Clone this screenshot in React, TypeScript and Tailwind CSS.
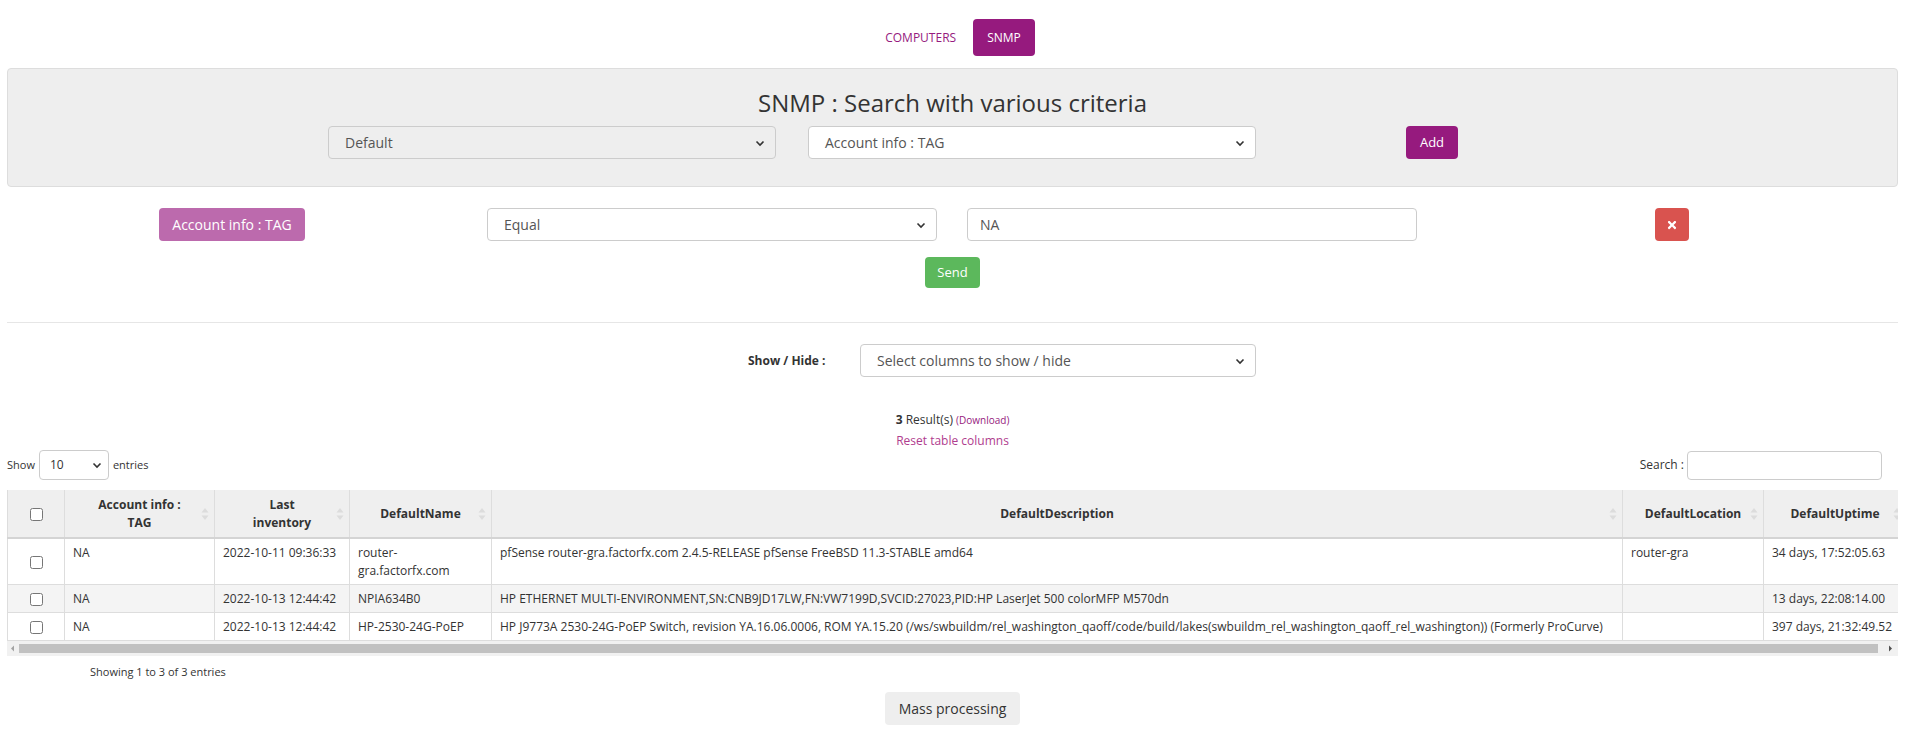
import React from "react";
import { FaTimes } from "react-icons/fa";

const purple = "bg-[#961a7e]";

const Chevron = () => (
  <svg width="10" height="10" viewBox="0 0 10 10" className="shrink-0">
    <path d="M1.5 3.5 L5 7 L8.5 3.5" fill="none" stroke="#333" strokeWidth="1.6" />
  </svg>
);

const SortIcon = () => (
  <svg width="8" height="14" viewBox="0 0 8 14" className="absolute right-[5px] top-1/2 -translate-y-1/2">
    <path d="M4 1 L7.5 5.5 H0.5 Z" fill="#dcdcdc" />
    <path d="M4 13 L7.5 8.5 H0.5 Z" fill="#dcdcdc" />
  </svg>
);

const Select = ({ label, className }: { label: string; className: string }) => (
  <div
    className={`flex items-center justify-between border border-[#ccc] rounded-[4px] pl-[16px] pr-[10px] text-[14px] text-[#555] ${className}`}
  >
    <span>{label}</span>
    <Chevron />
  </div>
);

const columns = [
  { key: "check", w: "w-[57px]" },
  { key: "Account info :\nTAG", w: "w-[150px]" },
  { key: "Last\ninventory", w: "w-[135px]" },
  { key: "DefaultName", w: "w-[142px]" },
  { key: "DefaultDescription", w: "w-[1131px]" },
  { key: "DefaultLocation", w: "w-[141px]" },
  { key: "DefaultUptime", w: "w-[143px]" },
];

const rows = [
  {
    tag: "NA",
    last: "2022-10-11 09:36:33",
    name: "router-\ngra.factorfx.com",
    desc: "pfSense router-gra.factorfx.com 2.4.5-RELEASE pfSense FreeBSD 11.3-STABLE amd64",
    loc: "router-gra",
    up: "34 days, 17:52:05.63",
  },
  {
    tag: "NA",
    last: "2022-10-13 12:44:42",
    name: "NPIA634B0",
    desc: "HP ETHERNET MULTI-ENVIRONMENT,SN:CNB9JD17LW,FN:VW7199D,SVCID:27023,PID:HP LaserJet 500 colorMFP M570dn",
    loc: "",
    up: "13 days, 22:08:14.00",
  },
  {
    tag: "NA",
    last: "2022-10-13 12:44:42",
    name: "HP-2530-24G-PoEP",
    desc: "HP J9773A 2530-24G-PoEP Switch, revision YA.16.06.0006, ROM YA.15.20 (/ws/swbuildm/rel_washington_qaoff/code/build/lakes(swbuildm_rel_washington_qaoff_rel_washington)) (Formerly ProCurve)",
    loc: "",
    up: "397 days, 21:32:49.52",
  },
];

const App = () => {
  return (
    <div className="min-h-[737px] bg-white text-[#333] pb-4" style={{ fontFamily: "'Open Sans', sans-serif" }}>
      {/* Top tabs */}
      <div className="flex justify-center items-center gap-[2px] pt-[19px]">
        <span className="px-[15px] text-[12px] text-[#961a7e] leading-[37px]">COMPUTERS</span>
        <span className={`${purple} text-white text-[12px] rounded-[4px] px-[14px] leading-[37px]`}>SNMP</span>
      </div>

      {/* Search panel */}
      <div className="mx-[7px] mt-[12px] h-[119px] bg-[#eeeeee] border border-[#dddddd] rounded-[4px] pt-[17px]">
        <h2 className="text-center text-[24px] leading-[33px] text-[#333]">SNMP : Search with various criteria</h2>
        <div className="flex items-center mt-[7px] pl-[320px]">
          <Select label="Default" className="w-[448px] h-[33px] bg-[#eeeeee]" />
          <Select label="Account info : TAG" className="w-[448px] h-[33px] bg-white ml-[32px]" />
          <button className={`${purple} ml-[150px] h-[33px] w-[52px] rounded-[4px] text-white text-[13px]`}>Add</button>
        </div>
      </div>

      {/* Criteria row */}
      <div className="flex items-center mt-[21px] pl-[159px]">
        <span className="bg-[#bc6aad] text-white text-[14px] rounded-[4px] h-[33px] w-[146px] flex items-center justify-center">
          Account info : TAG
        </span>
        <Select label="Equal" className="w-[450px] h-[33px] bg-white ml-[182px]" />
        <div className="w-[450px] h-[33px] ml-[30px] border border-[#ccc] rounded-[4px] pl-[12px] flex items-center text-[14px] text-[#555]">
          NA
        </div>
        <button className="ml-[238px] w-[34px] h-[33px] rounded-[4px] bg-[#d9534f] text-white flex items-center justify-center">
          <FaTimes size={12} />
        </button>
      </div>
      <div className="flex justify-center mt-[16px]">
        <button className="bg-[#5cb85c] text-white text-[13px] rounded-[4px] h-[31px] px-[12px]">Send</button>
      </div>

      <hr className="mx-[7px] mt-[34px] border-t border-[#e6e6e6]" />

      {/* Show / hide */}
      <div className="flex items-center mt-[21px] pl-[748px]">
        <span className="text-[12px] font-bold w-[82px] whitespace-nowrap">Show / Hide :</span>
        <Select label="Select columns to show / hide" className="w-[396px] h-[33px] bg-white ml-[30px]" />
      </div>

      <div className="flex flex-col items-center mt-[34px] leading-[18px]">
        <div className="text-[12px]">
          <b>3</b> Result(s) <span className="text-[10px] text-[#961a7e]">(Download)</span>
        </div>
        <div className="text-[12px] text-[#b03c8e] mt-[3px]">Reset table columns</div>
      </div>

      {/* Table controls */}
      <div className="flex items-center justify-between mx-[7px] mt-[0px] text-[11px]">
        <div className="flex items-center gap-[4px]">
          <span>Show</span>
          <div className="w-[70px] h-[30px] border border-[#ccc] rounded-[4px] flex items-center justify-between pl-[10px] pr-[6px] text-[12px]">
            <span>10</span>
            <Chevron />
          </div>
          <span>entries</span>
        </div>
        <div className="flex items-center gap-[3px] mr-[16px]">
          <span className="text-[12px]">Search :</span>
          <div className="w-[195px] h-[29px] border border-[#ccc] rounded-[4px]" />
        </div>
      </div>

      {/* Table */}
      <div className="mx-[7px] mt-[10px] overflow-hidden">
        <table className="border-collapse text-[12px] leading-[18px] w-[1899px] table-fixed">
          <thead>
            <tr className="bg-[#efefef]">
              {columns.map((c, i) => (
                <th
                  key={c.key}
                  className={`${c.w} relative h-[48px] border-x border-[#dddddd] border-b-2 border-b-[#d4d4d4] font-bold text-center px-[8px] whitespace-pre-line`}
                >
                  {i === 0 ? <input type="checkbox" className="align-middle" /> : c.key}
                  {i > 0 && <SortIcon />}
                </th>
              ))}
            </tr>
          </thead>
          <tbody>
            {rows.map((r, i) => (
              <tr key={i} className={i === 1 ? "bg-[#f4f4f4]" : "bg-white"}>
                <td className="border border-[#dddddd] text-center align-middle">
                  <input type="checkbox" className="align-middle" />
                </td>
                {[r.tag, r.last, r.name, r.desc, r.loc, r.up].map((v, j) => (
                  <td key={j} className="border border-[#dddddd] align-top px-[8px] py-[4.5px] whitespace-pre-line">
                    {v}
                  </td>
                ))}
              </tr>
            ))}
          </tbody>
        </table>
        {/* horizontal scrollbar */}
        <div className="h-[15px] bg-[#f1f1f1] flex items-center">
          <svg width="12" height="15" viewBox="0 0 12 15" className="shrink-0">
            <path d="M7 4.5 L4 7.5 L7 10.5 Z" fill="#a3a3a3" />
          </svg>
          <div className="h-[9px] flex-1 bg-[#c1c1c1]" />
          <svg width="20" height="15" viewBox="0 0 20 15" className="shrink-0">
            <path d="M11 4.5 L14 7.5 L11 10.5 Z" fill="#505050" />
          </svg>
        </div>
      </div>

      <div className="text-[11px] pl-[90px] mt-[8px]">Showing 1 to 3 of 3 entries</div>

      <div className="flex justify-center mt-[11px]">
        <button className="bg-[#eeeeee] rounded-[4px] h-[33px] w-[135px] text-[14px] text-[#333]">Mass processing</button>
      </div>
    </div>
  );
};

export default App;
